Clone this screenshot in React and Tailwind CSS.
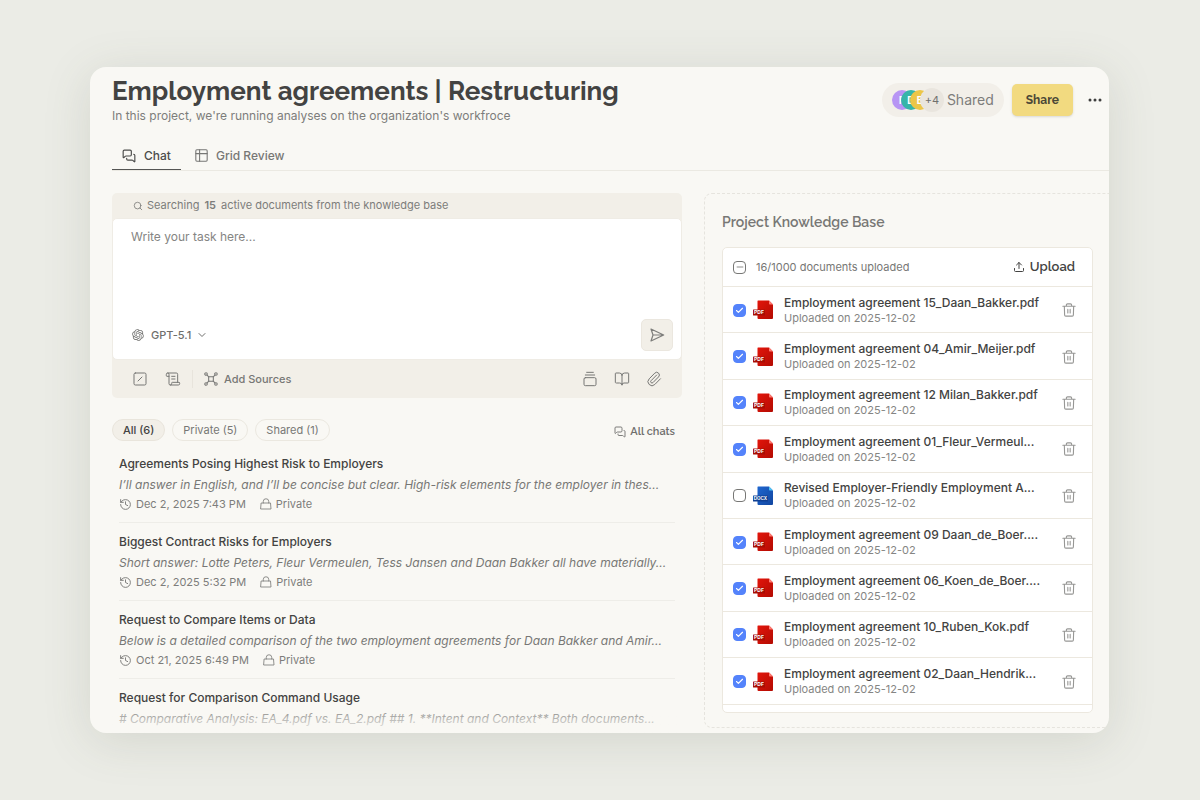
import React, { useState } from "react";
import {
	BookOpen,
	Check,
	ChevronDown,
	GalleryVerticalEnd,
	History,
	MessagesSquare,
	Minus,
	Paperclip,
	ScrollText,
	Search,
	SquareSlash,
	Upload,
} from "lucide-react";
import { RiOpenaiFill } from "react-icons/ri";

const chats = [
	{
		title: "Agreements Posing Highest Risk to Employers",
		preview: "I’ll answer in English, and I’ll be concise but clear. High-risk elements for the employer in thes...",
		date: "Dec 2, 2025 7:43 PM",
	},
	{
		title: "Biggest Contract Risks for Employers",
		preview: "Short answer: Lotte Peters, Fleur Vermeulen, Tess Jansen and Daan Bakker all have materially...",
		date: "Dec 2, 2025 5:32 PM",
	},
	{
		title: "Request to Compare Items or Data",
		preview: "Below is a detailed comparison of the two employment agreements for Daan Bakker and Amir...",
		date: "Oct 21, 2025 6:49 PM",
	},
	{
		title: "Request for Comparison Command Usage",
		preview: "# Comparative Analysis: EA_4.pdf vs. EA_2.pdf ## 1. **Intent and Context** Both documents...",
	},
];

const initialDocs = [
	{ name: "Employment agreement 15_Daan_Bakker.pdf", type: "PDF", active: true },
	{ name: "Employment agreement 04_Amir_Meijer.pdf", type: "PDF", active: true },
	{ name: "Employment agreement 12 Milan_Bakker.pdf", type: "PDF", active: true },
	{ name: "Employment agreement 01_Fleur_Vermeul...", type: "PDF", active: true },
	{ name: "Revised Employer-Friendly Employment A...", type: "DOCX", active: false },
	{ name: "Employment agreement 09 Daan_de_Boer....", type: "PDF", active: true },
	{ name: "Employment agreement 06_Koen_de_Boer....", type: "PDF", active: true },
	{ name: "Employment agreement 10_Ruben_Kok.pdf", type: "PDF", active: true },
	{ name: "Employment agreement 02_Daan_Hendrik...", type: "PDF", active: true },
];

const filters = ["All (6)", "Private (5)", "Shared (1)"];

const Icon = ({ className, width = 1.5, children }) => (
	<svg
		viewBox="0 0 24 24"
		fill="none"
		stroke="currentColor"
		strokeWidth={width}
		strokeLinecap="round"
		strokeLinejoin="round"
		aria-hidden="true"
		className={className}
	>
		{children}
	</svg>
);

const GridIcon = () => (
	<Icon className="size-[13px]" width={2}>
		<rect x="1.5" y="1.5" width="21" height="21" rx="2" />
		<path d="M1.5 8.5h21M8.5 1.5v21" />
	</Icon>
);

const SourcesIcon = () => (
	<Icon className="size-[14px]" width={1.8}>
		<rect x="8" y="8" width="8" height="8" rx="1" />
		<circle cx="3.5" cy="3.5" r="2.2" />
		<circle cx="20.5" cy="3.5" r="2.2" />
		<circle cx="3.5" cy="20.5" r="2.2" />
		<circle cx="20.5" cy="20.5" r="2.2" />
		<path d="m5.2 5.2 3 3M18.8 5.2l-3 3M5.2 18.8l3-3M18.8 18.8l-3-3" />
	</Icon>
);

const SendIcon = () => (
	<Icon className="size-4" width={1.8}>
		<path d="M3 3 22 12 3 21 6 12zM6 12H21" />
	</Icon>
);

const LockIcon = () => (
	<Icon className="size-3" width={1.7}>
		<path d="M3 10h18l1 12H2zM6.5 10V7a5.5 5.5 0 0 1 11 0v3" />
	</Icon>
);

const TrashIcon = () => (
	<Icon className="size-[14px]" width={1.9}>
		<path d="M1.5 5.5h21M4 5.5l.5 15a2 2 0 0 0 2 2h11a2 2 0 0 0 2-2l.5-15M7.5 5.5v-2a2 2 0 0 1 2-2h5a2 2 0 0 1 2 2v2M10 11v6M14 11v6" />
	</Icon>
);

const FileIcon = ({ type }) => {
	const pdf = type === "PDF";
	return (
		<svg viewBox="0 0 20 20" className="size-5 shrink-0" aria-hidden="true">
			<defs>
				<linearGradient id={`sheet-${type}`} x1="0" y1="0" x2="1" y2="1">
					<stop offset="0" stopColor={pdf ? "#e2150b" : "#1f66cf"} />
					<stop offset="1" stopColor={pdf ? "#b30b02" : "#1146a0"} />
				</linearGradient>
			</defs>
			<path d="M5 .5h11l4 4V18a1 1 0 0 1-1 1H5.500a1 1 0 0 1-1-1V1a.5.5 0 0 1 .5-.5z" fill={`url(#sheet-${type})`} />
			<path d="M16 .5l4 4h-3.200a.8.8 0 0 1-.8-.8z" fill={pdf ? "#ff7b72" : "#4ec3f5"} />
			<rect x="0" y="9.5" width={pdf ? 12 : 15} height="6" rx=".5" fill={pdf ? "#a80d04" : "#0f3f93"} />
			<text
				x={pdf ? 6 : 7.5}
				y="14.3"
				textAnchor="middle"
				fontSize={pdf ? 5 : 4.5}
				fontWeight="700"
				fontFamily="Inter, sans-serif"
				fill="#fff"
			>
				{type}
			</text>
		</svg>
	);
};

const Tab = ({ active, icon, children }) => (
	<button
		role="tab"
		aria-selected={active}
		className={
			active
				? "flex h-8 items-center gap-2 border-b border-[#555553] px-2.5 pt-1 text-xs font-medium text-[#4c4c4b]"
				: "flex h-8 items-center gap-2 border-b border-transparent px-3.5 pt-1 text-xs font-medium text-[#777775]"
		}
	>
		{icon}
		{children}
	</button>
);

const Header = () => (
	<header className="flex items-start justify-between pt-2 pr-[7px] pl-[22px]">
		<div>
			<h1 className="font-['Raleway','Lato',sans-serif] text-[26px] leading-8 font-bold whitespace-nowrap text-[#434342]">
				Employment agreements | Restructuring
			</h1>
			<p className="mt-px text-xs leading-4 text-[#7d7d7b]">
				In this project, we're running analyses on the organization's workfroce
			</p>
		</div>
		<div className="flex items-center pt-2">
			<div className="flex h-[34px] items-center gap-[3px] rounded-full bg-[#f2efe9] px-[10px]">
				<div className="flex items-center text-[11px] font-semibold text-white">
					<span className="flex size-5 items-center justify-center rounded-full bg-[#b795f4]">F</span>
					<span className="-ml-[11px] flex size-5 items-center justify-center rounded-full bg-[#35b5a9]">D</span>
					<span className="-ml-[11px] flex size-5 items-center justify-center rounded-full bg-[#ecc648]">E</span>
					<span className="-ml-[10px] flex size-6 items-center justify-center rounded-full bg-[#e9e5de] font-normal text-[#6f6f6d]">
						+4
					</span>
				</div>
				<span className="text-sm text-[#7d7d7b]">Shared</span>
			</div>
			<button className="ml-2 h-8 rounded-[5px] bg-[#f2da80] px-[14px] font-['Raleway','Lato',sans-serif] text-xs font-bold text-[#4b4737] shadow-sm">
				Share
			</button>
			<button aria-label="More options" className="ml-[15px] text-[#3f3f3e]">
				<svg viewBox="0 0 14 14" className="size-[14px]" fill="currentColor">
					<circle cx="2" cy="7" r="1.5" />
					<circle cx="7" cy="7" r="1.5" />
					<circle cx="12" cy="7" r="1.5" />
				</svg>
			</button>
		</div>
	</header>
);

const Composer = () => (
	<section className="rounded-[5px] bg-[#f2efe8]">
		<p className="flex h-[25px] items-center pl-[21px] text-[11px] text-[#7d7d7b]">
			<Search className="mr-1 size-[10px]" />
			Searching <span className="mx-[5px] font-semibold">15</span> active documents from the knowledge base
		</p>
		<div className="rounded-[5px] border border-[#efece5] bg-white pt-2 pr-2 pb-2 pl-[18px]">
			<textarea
				aria-label="Task"
				placeholder="Write your task here..."
				className="block h-[92px] w-full resize-none text-xs leading-5 text-[#434342] outline-none placeholder:text-[#858583]"
			/>
			<div className="flex items-center justify-between">
				<label className="flex items-center text-[#6f6f6d]">
					<RiOpenaiFill className="mr-[6px] size-[14px]" />
					<select aria-label="Model" className="w-[45px] appearance-none text-[11px] font-medium outline-none">
						<option>GPT-5.1</option>
					</select>
					<ChevronDown className="size-3" />
				</label>
				<button
					aria-label="Send"
					className="flex size-8 items-center justify-center rounded-[5px] border border-[#ebe7df] bg-[#f2efe8] text-[#7d7d7b]"
				>
					<SendIcon />
				</button>
			</div>
		</div>
		<div className="flex h-[38px] items-center px-5 text-[#777775]">
			<button aria-label="Commands">
				<SquareSlash className="size-4" strokeWidth={1.5} />
			</button>
			<button aria-label="Prompts" className="ml-[17px]">
				<ScrollText className="size-4" strokeWidth={1.5} />
			</button>
			<button className="ml-[11px] flex h-[18px] items-center gap-1.5 border-l border-[#e8e4dc] pl-[11px] text-[11px] font-medium">
				<SourcesIcon />
				Add Sources
			</button>
			<div className="ml-auto flex gap-4">
				<button aria-label="Collections">
					<GalleryVerticalEnd className="size-4" strokeWidth={1.5} />
				</button>
				<button aria-label="Library">
					<BookOpen className="size-4" strokeWidth={1.5} />
				</button>
				<button aria-label="Attach file">
					<Paperclip className="size-4" strokeWidth={1.5} />
				</button>
			</div>
		</div>
	</section>
);

const ChatItem = ({ title, preview, date }) => (
	<li className="border-b border-[#eeede8] pt-[9px] pb-[10px] last:border-b-0">
		<h3 className="text-xs leading-5 font-medium text-[#434342]">{title}</h3>
		<p className="mt-px text-xs leading-5 whitespace-nowrap text-[#777775] italic">{preview}</p>
		{date && (
			<div className="mt-px flex items-center gap-1 text-[11px] leading-4 text-[#7d7d7b]">
				<History className="size-[13px]" strokeWidth={1.8} />
				{date}
				<span className="ml-2.5 flex items-center gap-1">
					<LockIcon />
					Private
				</span>
			</div>
		)}
	</li>
);

const ChatList = () => {
	const [filter, setFilter] = useState(filters[0]);

	return (
		<section className="pt-[21px]">
			<div className="flex items-center gap-[7px] pr-[7px]">
				{filters.map((f) => (
					<button
						key={f}
						onClick={() => setFilter(f)}
						className={
							f === filter
								? "h-[22px] rounded-full border border-[#e9e5dc] bg-[#f2efe8] px-[10px] text-[11px] font-medium text-[#434342]"
								: "h-[22px] rounded-full border border-[#ebe8e0] px-[10px] text-[11px] text-[#777775]"
						}
					>
						{f}
					</button>
				))}
				<a
					href="#chats"
					className="ml-auto flex items-center gap-1 pt-1 font-['Raleway','Lato',sans-serif] text-[11px] font-semibold text-[#6f6f6d]"
				>
					<MessagesSquare className="size-3" strokeWidth={1.8} />
					All chats
				</a>
			</div>
			<ul className="mt-1 px-[7px]">
				{chats.map((chat) => (
					<ChatItem key={chat.title} {...chat} />
				))}
			</ul>
		</section>
	);
};

const KnowledgeBase = () => {
	const [docs, setDocs] = useState(initialDocs);

	const toggle = (name) => {
		setDocs(docs.map((d) => (d.name === name ? { ...d, active: !d.active } : d)));
	};

	return (
		<section className="mb-[5px] flex w-[405px] shrink-0 flex-col rounded-l-lg border border-r-0 border-dashed border-[#e6e4de] pt-[18px] pr-4 pb-[14px] pl-[17px]">
			<h2 className="font-['Raleway','Lato',sans-serif] text-sm leading-5 font-semibold text-[#777775]">
				Project Knowledge Base
			</h2>
			<div className="mt-[15px] flex flex-1 flex-col rounded-[5px] border border-[#ece8df] bg-white pb-[7px]">
				<div className="flex h-[38px] shrink-0 items-center pr-[17px] pl-[10px]">
					<label className="flex items-center gap-2.5 text-[11px] text-[#777775]">
						<span className="grid place-items-center">
							<input
								type="checkbox"
								className="col-start-1 row-start-1 size-[13px] appearance-none rounded-[4px] border border-[#777775]"
							/>
							<Minus className="pointer-events-none col-start-1 row-start-1 size-[10px]" />
						</span>
						16/1000 documents uploaded
					</label>
					<button className="ml-auto flex items-center gap-[5px] font-['Raleway','Lato',sans-serif] text-[13px] font-semibold text-[#434342]">
						<Upload className="size-3" />
						Upload
					</button>
				</div>
				<ul className="flex flex-1 flex-col border-y border-[#ece8df]">
					{docs.map((doc) => (
						<li
							key={doc.name}
							className="flex min-h-[46px] flex-1 items-center border-b border-[#ece8df] pt-px pr-4 pl-[10px] last:border-b-0"
						>
							<label className="flex items-center">
								<span className="grid place-items-center">
									<input
										type="checkbox"
										checked={doc.active}
										onChange={() => toggle(doc.name)}
										className="col-start-1 row-start-1 size-[13px] appearance-none rounded-[4px] border border-[#777775] checked:border-[#5483fb] checked:bg-[#5483fb]"
									/>
									{doc.active && (
										<Check
											className="pointer-events-none col-start-1 row-start-1 size-[9px] text-white"
											strokeWidth={3}
										/>
									)}
								</span>
								<span className="mr-[11px] ml-[7px]">
									<FileIcon type={doc.type} />
								</span>
								<span>
									<span className="block text-xs leading-4 font-medium whitespace-nowrap text-[#434342]">
										{doc.name}
									</span>
									<span className="block text-[11px] leading-[15px] text-[#858583]">Uploaded on 2025-12-02</span>
								</span>
							</label>
							<button aria-label={`Delete ${doc.name}`} className="ml-auto text-[#979795]">
								<TrashIcon />
							</button>
						</li>
					))}
				</ul>
			</div>
		</section>
	);
};

const App = () => {
	return (
		<div className="h-screen bg-[#ebece6] py-[67px] pr-[91px] pl-[90px] font-['Inter',sans-serif]">
			<main className="flex h-full flex-col overflow-hidden rounded-2xl bg-[#f9f8f4] shadow-[0_8px_48px_rgba(80,90,70,0.15)]">
				<Header />
				<div role="tablist" className="mt-[14px] ml-[22px] flex border-b border-[#ebe9e2]">
					<Tab active icon={<MessagesSquare className="size-[14px]" />}>
						Chat
					</Tab>
					<Tab icon={<GridIcon />}>Grid Review</Tab>
				</div>
				<div className="flex min-h-0 flex-1 gap-[22px] pt-[22px] pl-[22px]">
					<div className="relative min-w-0 flex-1">
						<Composer />
						<ChatList />
						<div className="pointer-events-none absolute inset-x-0 bottom-0 h-7 bg-linear-to-t from-[#f9f8f4] to-transparent" />
					</div>
					<KnowledgeBase />
				</div>
			</main>
		</div>
	);
};

export default App;
